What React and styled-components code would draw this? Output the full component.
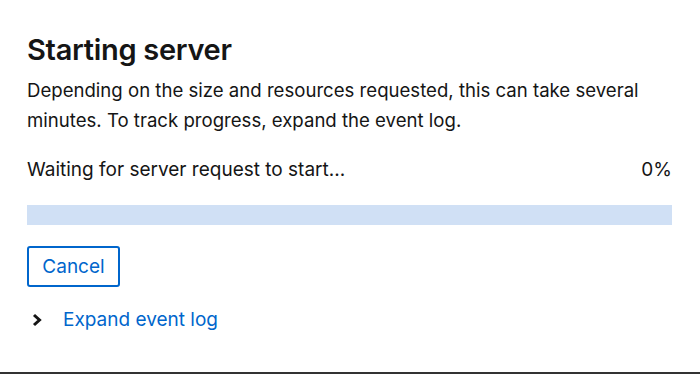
import React from 'react'
import styled, { createGlobalStyle } from 'styled-components'

const GlobalStyle = createGlobalStyle`
  html, body {
    margin: 0;
    padding: 0;
    background: #ffffff;
  }
  body {
    font-family: Inter, "Noto Sans", sans-serif;
  }
`

const Page = styled.div`
  width: 700px;
  height: 374px;
  box-sizing: border-box;
  border-bottom: 2px solid #333;
  padding: 30px 28px 0 27px;
  display: flex;
  flex-direction: column;
`

const Title = styled.h1`
  margin: 0;
  font-size: 29px;
  font-weight: 600;
  line-height: 40px;
  color: #151515;
  letter-spacing: -0.3px;
`

const Description = styled.p`
  margin: 5px 0 0;
  font-size: 18.6px;
  line-height: 30px;
  color: #151515;
`

const StatusRow = styled.div`
  display: flex;
  justify-content: space-between;
  align-items: center;
  margin-top: 21px;
  font-size: 19px;
  line-height: 28px;
  color: #151515;
`

const Track = styled.div`
  margin-top: 21px;
  height: 20px;
  background: #d0e0f5;
`

const Fill = styled.div`
  height: 100%;
  background: #0066cc;
`

const CancelButton = styled.button`
  align-self: flex-start;
  margin-top: 21px;
  width: 93px;
  height: 41px;
  box-sizing: border-box;
  border: 2px solid #0066cc;
  border-radius: 3px;
  background: #fff;
  color: #0066cc;
  font-family: inherit;
  font-size: 19px;
  padding: 0;
  cursor: pointer;
`

const Toggle = styled.button`
  align-self: flex-start;
  display: flex;
  align-items: center;
  gap: 21px;
  margin-top: 19px;
  padding: 0 0 0 5px;
  border: 0;
  background: none;
  color: #0066cc;
  font-family: inherit;
  font-size: 19px;
  line-height: 28px;
  cursor: pointer;
`

const Chevron = () => (
  <svg width="10" height="14" viewBox="0 0 10 14">
    <path d="M2 2 L7.5 7 L2 12" fill="none" stroke="#151515" strokeWidth="3" />
  </svg>
)

export default function App() {
  const progress = 0
  return (
    <>
      <GlobalStyle />
      <Page>
        <Title>Starting server</Title>
        <Description>
          Depending on the size and resources requested, this can take several
          minutes. To track progress, expand the event log.
        </Description>
        <StatusRow>
          <span>Waiting for server request to start...</span>
          <span>{progress}%</span>
        </StatusRow>
        <Track>
          <Fill style={{ width: `${progress}%` }} />
        </Track>
        <CancelButton>Cancel</CancelButton>
        <Toggle>
          <Chevron />
          Expand event log
        </Toggle>
      </Page>
    </>
  )
}
